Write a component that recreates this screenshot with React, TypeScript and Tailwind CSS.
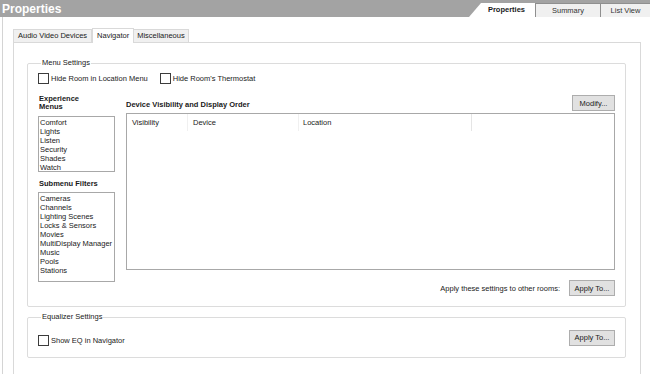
import React from 'react';

const experienceMenus = ['Comfort', 'Lights', 'Listen', 'Security', 'Shades', 'Watch'];
const submenuFilters = ['Cameras', 'Channels', 'Lighting Scenes', 'Locks & Sensors', 'Movies', 'MultiDisplay Manager', 'Music', 'Pools', 'Stations'];

const Checkbox: React.FC<{ label: string }> = ({ label }) => (
    <label className="flex items-center gap-[2px]">
        <span className="w-[11px] h-[11px] border border-[#3c3c3c] bg-white" />
        <span>{label}</span>
    </label>
);

const WinButton: React.FC<{ label: string; className?: string }> = ({ label, className = '' }) => (
    <button className={`h-[16px] bg-[#e1e1e1] border border-[#adadad] text-[7.5px] text-[#1a1a1a] ${className}`}>
        {label}
    </button>
);

const ListBox: React.FC<{ items: string[]; height: string }> = ({ items, height }) => (
    <div className={`w-[77px] ${height} border border-[#a8a8a8] bg-white px-[1px] pt-[1px] leading-[9px]`}>
        {items.map(item => (
            <div key={item}>{item}</div>
        ))}
    </div>
);

export default function App() {
    return (
        <div className="w-[650px] h-[374px] bg-white overflow-hidden font-['Liberation_Sans',Arial,sans-serif] text-[7.5px] text-[#1a1a1a] flex flex-col">
            {/* title bar */}
            <div className="h-[17px] bg-[#a3a3a3] flex items-end justify-between shrink-0">
                <div className="self-center pl-[2px] text-[12px] font-bold text-white leading-none">Properties</div>
                <div className="flex items-end h-[14px]">
                    <div className="w-[66px] h-full bg-white [clip-path:polygon(12px_0,100%_0,100%_100%,0_100%)] flex items-center justify-end pr-[10px] font-bold">
                        Properties
                    </div>
                    <div className="w-[65px] h-full bg-[#f0f0f0] border-l border-t border-[#8f8f8f] flex items-center justify-center text-[#333]">
                        Summary
                    </div>
                    <div className="w-[50px] h-full bg-[#f0f0f0] border-l border-t border-[#8f8f8f] flex items-center justify-center text-[#333]">
                        List View
                    </div>
                </div>
            </div>

            {/* body */}
            <div className="flex-1 ml-[2px] border-l border-[#d4d4d4] pl-[10px] pt-[10px] flex flex-col">
                {/* tab strip */}
                <div className="flex items-end h-[15px]">
                    <div className="h-[13px] px-[4px] bg-[#f0f0f0] border border-b-0 border-[#d9d9d9] flex items-center">Audio Video Devices</div>
                    <div className="h-[15px] px-[4px] bg-white border border-b-0 border-[#d9d9d9] flex items-center -mb-px relative">Navigator</div>
                    <div className="h-[13px] px-[3px] bg-[#f0f0f0] border border-b-0 border-l-0 border-[#d9d9d9] flex items-center">Miscellaneous</div>
                </div>

                {/* tab page */}
                <div className="w-[628px] flex-1 border border-b-0 border-[#d9d9d9] pl-[13px] pr-[14px] pt-[16px] flex flex-col gap-[6px]">
                    <fieldset className="border border-[#dcdcdc] rounded-[2px] pl-[10px] pr-[10px] pb-[8px] h-[248px]">
                        <legend className="ml-[3px] px-[1px] leading-[8px]">Menu Settings</legend>

                        <div className="flex gap-[12px] mt-[6px]">
                            <Checkbox label="Hide Room in Location Menu" />
                            <Checkbox label="Hide Room's Thermostat" />
                        </div>

                        <div className="flex gap-[11px] mt-[11px]">
                            <div className="flex flex-col">
                                <div className="font-bold leading-[8px] h-[16px] pl-[1px]">Experience<br />Menus</div>
                                <div className="mt-[5px]">
                                    <ListBox items={experienceMenus} height="h-[56px]" />
                                </div>
                                <div className="font-bold leading-[8px] mt-[8px] pl-[1px]">Submenu Filters</div>
                                <div className="mt-[4px]">
                                    <ListBox items={submenuFilters} height="h-[90px]" />
                                </div>
                            </div>

                            <div className="flex-1 flex flex-col">
                                <div className="flex items-end justify-between h-[16px] mb-[2px]">
                                    <div className="font-bold text-[7.5px] leading-[8px] pb-[2px]">Device Visibility and Display Order</div>
                                    <WinButton label="Modify..." className="w-[43px]" />
                                </div>
                                <div className="h-[157px] border border-[#a8a8a8] bg-white">
                                    <div className="flex h-[17px] items-center">
                                        <div className="w-[61px] h-full pl-[5px] flex items-center border-r border-[#f0f0f0]">Visibility</div>
                                        <div className="w-[111px] h-full pl-[5px] flex items-center border-r border-[#f0f0f0]">Device</div>
                                        <div className="w-[173px] h-full pl-[4px] flex items-center border-r border-[#e5e5e5]">Location</div>
                                    </div>
                                </div>
                                <div className="flex items-center justify-end gap-[9px] mt-[10px]">
                                    <span>Apply these settings to other rooms:</span>
                                    <WinButton label="Apply To..." className="w-[46px]" />
                                </div>
                            </div>
                        </div>
                    </fieldset>

                    <fieldset className="border border-[#dcdcdc] rounded-[2px] pl-[10px] pr-[10px] h-[45px]">
                        <legend className="ml-[3px] px-[1px] leading-[8px]">Equalizer Settings</legend>
                        <div className="flex items-end justify-between mt-[5px] h-[21px]">
                            <div className="pb-[1px]">
                                <Checkbox label="Show EQ in Navigator" />
                            </div>
                            <div className="self-start">
                                <WinButton label="Apply To..." className="w-[46px] mt-[4px]" />
                            </div>
                        </div>
                    </fieldset>
                </div>
            </div>
        </div>
    );
}
